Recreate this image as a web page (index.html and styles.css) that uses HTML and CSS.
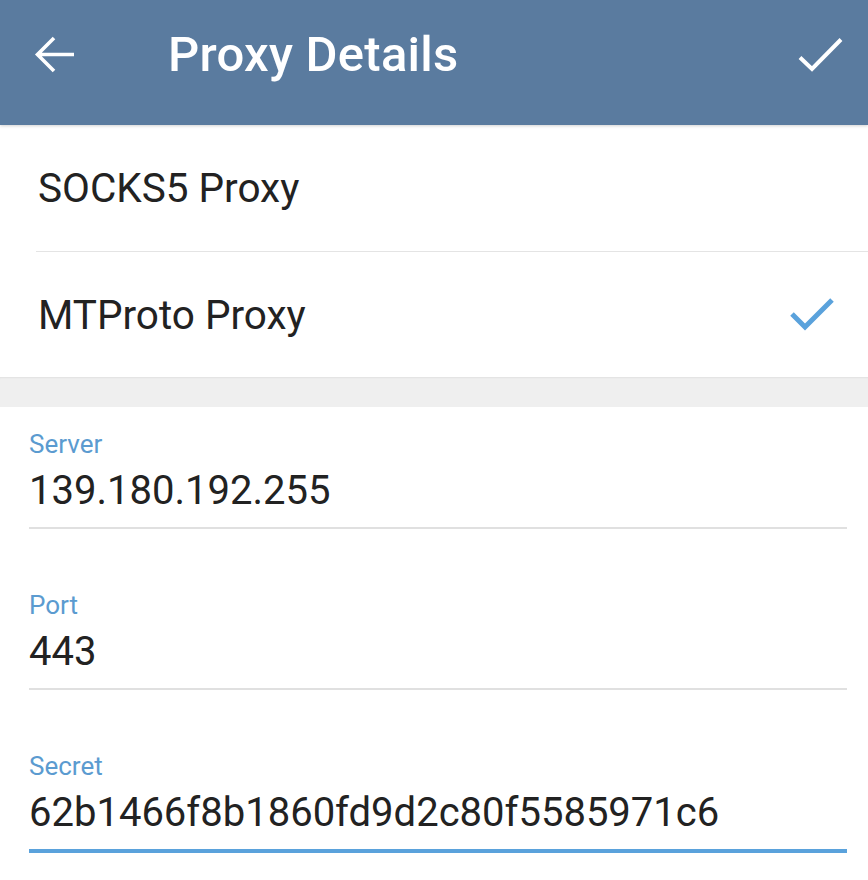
FILE: index.html
```html
<!DOCTYPE html>
<html>
<head>
<meta charset="utf-8">
<link rel="stylesheet" href="styles.css">
</head>
<body>
<header class="appbar">
  <div class="appbar-inner">
    <svg class="back" width="42" height="40" viewBox="0 0 42 40">
      <path d="M40 19.5H3.5 M20 3 L3.5 19.5 L20 36" fill="none" stroke="#fff" stroke-width="3.6" stroke-linecap="butt" stroke-linejoin="miter"/>
    </svg>
    <h1 class="title">Proxy Details</h1>
    <svg class="done" width="48" height="40" viewBox="0 0 48 40">
      <path d="M3 21.5 L15 33 L44 3.5" fill="none" stroke="#fff" stroke-width="4" stroke-linejoin="miter"/>
    </svg>
  </div>
</header>

<section class="types">
  <div class="row">
    <span class="row-text">SOCKS5 Proxy</span>
  </div>
  <div class="row">
    <span class="row-text">MTProto Proxy</span>
    <svg class="sel" width="48" height="38" viewBox="0 0 48 38">
      <path d="M4 17 L17 30 L44 3" fill="none" stroke="#5aa2dc" stroke-width="5"/>
    </svg>
  </div>
</section>

<div class="gap"></div>

<section class="fields">
  <div class="field">
    <div class="label">Server</div>
    <div class="value">139.180.192.255</div>
  </div>
  <div class="field">
    <div class="label">Port</div>
    <div class="value">443</div>
  </div>
  <div class="field active">
    <div class="label">Secret</div>
    <div class="value">62b1466f8b1860fd9d2c80f5585971c6</div>
  </div>
</section>
</body>
</html>
```

FILE: styles.css
```css
* { box-sizing: border-box; }
html, body { margin: 0; padding: 0; background: #fff; }
body {
  font-family: Roboto, "Noto Sans", sans-serif;
  width: 868px;
  height: 880px;
  overflow: hidden;
}

.appbar {
  height: 125px;
  background: #5a7b9f;
  position: relative;
  box-shadow: 0 1px 3px rgba(0,0,0,0.18);
}
.appbar-inner {
  height: 110px;
  display: flex;
  align-items: center;
}
.back {
  margin-left: 34px;
  flex: none;
}
.title {
  margin: 0 0 0 92px;
  font-size: 49px;
  font-weight: 500;
  color: #fff;
  line-height: 1.172;
  flex: 1;
  letter-spacing: 0.25px;
}
.done {
  margin-right: 23px;
  flex: none;
  margin-top: 2px;
}

.types {
  background: #fff;
}
.row {
  height: 126px;
  display: flex;
  align-items: center;
  padding-left: 38px;
  padding-right: 32px;
}
.row + .row {
  border-top: 1px solid #e4e4e4;
  margin-left: 36px;
  padding-left: 2px;
}
.row-text {
  flex: 1;
  font-size: 40.5px;
  color: #222;
  line-height: 1.172;
  padding-top: 2px;
}
.sel { flex: none; margin-top: 2px; }

.gap {
  height: 30px;
  background: #efefef;
  box-shadow: inset 0 2px 2px -1px rgba(0,0,0,0.06);
}

.fields {
  padding: 22px 21px 0 29px;
  display: flex;
  flex-direction: column;
  gap: 61px;
}
.field {
  border-bottom: 2px solid #e0e0e0;
  padding-bottom: 13px;
}
.field.active {
  border-bottom: 4px solid #5aa2dc;
}
.label {
  font-size: 26px;
  line-height: 30px;
  color: #5b9bd0;
}
.value {
  margin-top: 9px;
  font-size: 40px;
  line-height: 46px;
  color: #222;
}
```
